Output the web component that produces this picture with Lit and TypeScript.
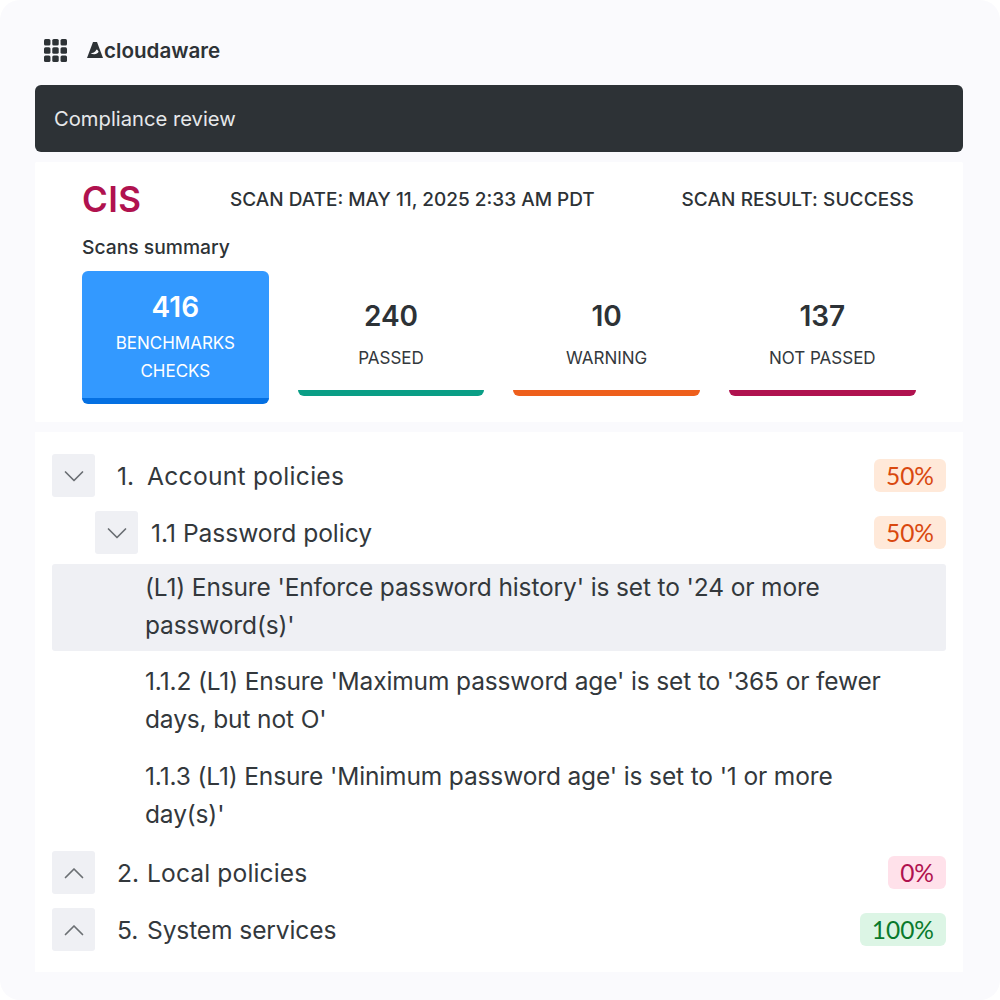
import { LitElement, html, css, svg } from "lit";
import { customElement } from "lit/decorators.js";

const chevron = (up: boolean) => html`<svg width="20" height="18" viewBox="0 0 20 18" fill="none" stroke="#6b6f73" stroke-width="1.7" stroke-linecap="round" stroke-linejoin="round"><path d=${up ? "M1.5 13.5 L10 5 L18.5 13.5" : "M1.5 5 L10 13.5 L18.5 5"}></path></svg>`;

@customElement("app-root")
export class AppRoot extends LitElement {
  static styles = css`
    :host { display: block; width: 1000px; height: 1000px; background: #fff; font-family: Inter, "Noto Sans", sans-serif; color: #2d3236; }
    .page { box-sizing: border-box; width: 1000px; height: 1000px; background: #fafafd; border-radius: 20px; padding: 0 37px 0 34.5px; display: flex; flex-direction: column; }
    .top { height: 85px; display: flex; align-items: center; padding: 15px 0 0 9.5px; gap: 20px; box-sizing: border-box; }
    .grid { display: block; }
    .logo { display: flex; align-items: center; gap: 1px; font-size: 20.6px; font-weight: 600; color: #2d3236; }
    .bar { height: 67px; background: #2d3236; border-radius: 6px; color: #e6e8ea; font-size: 20.2px; display: flex; align-items: center; padding-left: 19.5px; }
    .summary { margin-top: 10px; height: 260px; background: #fff; padding: 0 49px 0 47.5px; box-sizing: border-box; border-radius: 2px; }
    .head { display: flex; align-items: center; height: 72px; padding-top: 2px; box-sizing: border-box; }
    .cis { font-size: 35px; font-weight: 600; color: #b0124f; width: 148px; letter-spacing: 0.4px; }
    .meta { font-size: 19px; font-weight: 500; color: #2d3236; }
    .scan-date { flex: 1; }
    .scan-result { letter-spacing: 0.1px; }
    .sub { font-size: 19.3px; font-weight: 500; height: 37px; line-height: 26px; }
    .stats { display: grid; grid-template-columns: repeat(4, 186.67px); column-gap: 29px; }
    .stat { height: 125px; text-align: center; border-radius: 0 0 6px 6px; box-sizing: border-box; border-bottom: 6px solid; display: flex; flex-direction: column; align-items: center; padding-top: 28px; }
    .stat .n { font-size: 28px; font-weight: 600; line-height: 34px; }
    .stat .l { font-size: 17px; line-height: 28px; margin-top: 11px; color: #33383c; }
    .passed { border-color: #0a9e86; }
    .warning { border-color: #ee5f1c; }
    .notpassed { border-color: #b0124f; }
    .total { height: 133px; background: #3399ff; color: #fff; border-radius: 6px; border-bottom-color: #0570e2; padding-top: 19px; }
    .stat.total .l { margin-top: 5px; color: #fff; }
    .tree { margin-top: 10px; height: 540px; background: #fff; padding: 22px 17px 0 17.5px; box-sizing: border-box; font-size: 24.6px; color: #33383c; }
    .row { display: flex; align-items: center; height: 43px; }
    .row + .row { margin-top: 14px; }
    .toggle { width: 43px; height: 43px; background: #eff0f4; border-radius: 3px; display: flex; align-items: center; justify-content: center; flex: none; }
    .label { flex: 1; display: flex; }
    .num { flex: none; }
    .l1 .label { padding-left: 22px; }
    .l1 .num { width: 30px; }
    .l2 { padding-left: 43px; }
    .l2 .label { padding-left: 13px; }
    .l2 .num { margin-right: 7px; }
    .t-account { letter-spacing: 0.27px; }
    .t-password { letter-spacing: -0.06px; }
    .t-local { letter-spacing: 0.12px; }
    .t-system { letter-spacing: -0.13px; }
    .pct { font-family: Lato, sans-serif; font-size: 24.5px; height: 33px; line-height: 33px; padding: 0 12px; border-radius: 6px; }
    .o { background: #ffe9d9; color: #d9480f; }
    .r { background: #ffe1ea; color: #b0124f; }
    .g { background: #dcf5e5; color: #0a7a2c; }
    .items { margin: 10px 0 11px; display: flex; flex-direction: column; gap: 7px; }
    .item { padding: 4px 60px 7px 93px; line-height: 38px; border-radius: 3px; box-sizing: border-box; font-size: 24.5px; letter-spacing: -0.135px; }
    .item:last-child { margin-top: 1px; }
    .sel { background: #eff0f4; }
  `;

  private grid() {
    const cells = [];
    for (let y = 0; y < 3; y++) {
      for (let x = 0; x < 3; x++) {
        cells.push(svg`<rect x=${x * 8.2} y=${y * 8.2} width="6.4" height="6.4" rx="1.5" fill="#2d3236"></rect>`);
      }
    }
    return html`<svg class="grid" width="23" height="23" viewBox="0 0 22.8 22.8">${cells}</svg>`;
  }

  render() {
    return html`<div class="page">
      <div class="top">
        ${this.grid()}
        <div class="logo">
          <svg width="16" height="16" viewBox="0 0 16 16"><path d="M6 0 H10 L16 16 H0 Z" fill="#2d3236"></path><path d="M3.6 11.4 C5.6 10.8 8.2 10.4 9.6 7.4 C10.6 7.8 11.2 8.6 11.6 9.8 C10.6 12 7.4 13 3.6 11.4 Z" fill="#fafafd"></path></svg>
          <span>cloudaware</span>
        </div>
      </div>
      <div class="bar">Compliance review</div>
      <div class="summary">
        <div class="head">
          <div class="cis">CIS</div>
          <div class="meta scan-date">SCAN DATE: MAY 11, 2025 2:33 AM PDT</div>
          <div class="meta scan-result">SCAN RESULT: SUCCESS</div>
        </div>
        <div class="sub">Scans summary</div>
        <div class="stats">
          <div class="stat total"><div class="n">416</div><div class="l">BENCHMARKS<br />CHECKS</div></div>
          <div class="stat passed"><div class="n">240</div><div class="l">PASSED</div></div>
          <div class="stat warning"><div class="n">10</div><div class="l">WARNING</div></div>
          <div class="stat notpassed"><div class="n">137</div><div class="l">NOT PASSED</div></div>
        </div>
      </div>
      <div class="tree">
        <div class="row l1"><div class="toggle">${chevron(false)}</div><div class="label"><span class="num">1.</span><span class="t-account">Account policies</span></div><div class="pct o">50%</div></div>
        <div class="row l2"><div class="toggle">${chevron(false)}</div><div class="label"><span class="num">1.1</span><span class="t-password">Password policy</span></div><div class="pct o">50%</div></div>
        <div class="items">
          <div class="item sel">(L1) Ensure 'Enforce password history' is set to '24 or more password(s)'</div>
          <div class="item">1.1.2 (L1) Ensure 'Maximum password age' is set to '365 or fewer days, but not O'</div>
          <div class="item">1.1.3 (L1) Ensure 'Minimum password age' is set to '1 or more day(s)'</div>
        </div>
        <div class="row l1"><div class="toggle">${chevron(true)}</div><div class="label"><span class="num">2.</span><span class="t-local">Local policies</span></div><div class="pct r">0%</div></div>
        <div class="row l1"><div class="toggle">${chevron(true)}</div><div class="label"><span class="num">5.</span><span class="t-system">System services</span></div><div class="pct g">100%</div></div>
      </div>
    </div>`;
  }
}
